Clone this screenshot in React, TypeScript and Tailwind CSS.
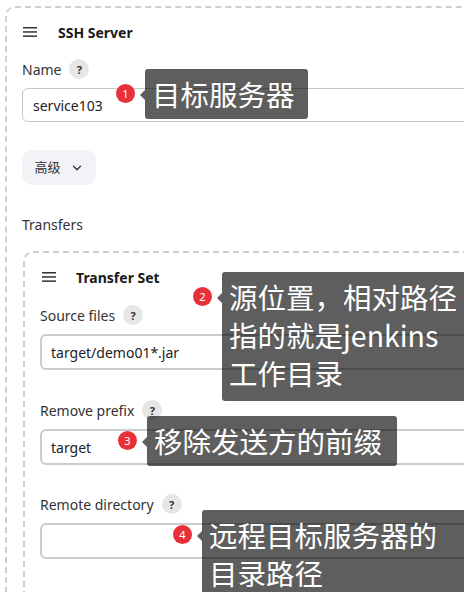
import { ChevronDown } from "lucide-react";

const uiFont = { fontFamily: '"Noto Sans", "Noto Sans CJK SC", sans-serif' };

function Burger() {
  return (
    <svg width="14" height="10" viewBox="0 0 14 10" className="shrink-0">
      <rect x="0" y="0" width="14" height="1.5" fill="#333" />
      <rect x="0" y="4.2" width="14" height="1.5" fill="#333" />
      <rect x="0" y="8.4" width="14" height="1.5" fill="#333" />
    </svg>
  );
}

function Help() {
  return (
    <span className="flex h-5 w-5 items-center justify-center rounded-full bg-[#e6e6e6] text-[11px] font-bold leading-none text-[#333]">
      ?
    </span>
  );
}

function Label({ text }: { text: string }) {
  return (
    <div className="flex h-5 items-center gap-2 text-[14px] text-[#333]">
      <span>{text}</span>
      <Help />
    </div>
  );
}

function TextBox({ value, thin }: { value?: string; thin?: boolean }) {
  return (
    <div
      className={
        thin
          ? "mt-[9px] flex h-[34px] w-[460px] items-center rounded-[6px] border border-[#c6c6c6] px-[10px] text-[14px] text-[#222]"
          : "mt-[9px] flex h-[36px] w-[460px] items-center rounded-[6px] border-2 border-[#c9cdcf] px-[9px] text-[14px] text-[#222]"
      }
    >
      {value}
    </div>
  );
}

// annotation: red numbered dot + dark callout box, laid over the form
function Callout({
  n,
  lines,
  x,
  y,
  w,
  h,
}: {
  n: number;
  lines: string[];
  x: number;
  y: number;
  w: number;
  h: number;
}) {
  return (
    <div className="absolute flex items-start" style={{ left: x - 29, top: y }}>
      <div className="mt-[15px] flex h-[19px] w-[19px] shrink-0 items-center justify-center rounded-full bg-[#e8303a] text-[11px] leading-none text-white">
        {n}
      </div>
      <div className="ml-[5px] mt-[21px] h-0 w-0 shrink-0 border-y-[5px] border-r-[5px] border-y-transparent border-r-black/[0.63]" />
      <div
        className="shrink-0 rounded-[3px] bg-black/[0.63] px-[7px] pt-[6px] text-[28.5px] leading-[38px] text-white"
        style={{ width: w, height: h, fontFamily: '"Noto Sans CJK SC", sans-serif' }}
      >
        {lines.map((l) => (
          <div key={l} className="whitespace-nowrap">
            {l}
          </div>
        ))}
      </div>
    </div>
  );
}

export default function App() {
  return (
    <div className="relative h-[592px] w-[464px] overflow-hidden bg-white" style={uiFont}>
      <div className="ml-[5px] mt-[6px] w-[500px] rounded-tl-[10px] border-2 border-dashed border-[#cfcfcf] pl-[15px] pt-[14px] pb-10">
        <div className="flex h-5 items-center gap-[21px] pl-[1px]">
          <Burger />
          <span className="text-[14px] font-bold text-[#1a1a1a]">SSH Server</span>
        </div>

        <div className="mt-[17px]">
          <Label text="Name" />
          <TextBox value="service103" thin />
        </div>

        <button className="mt-[28px] flex h-[35px] w-[74px] items-center justify-center gap-[9px] rounded-[10px] bg-[#f3f3f7] text-[13px] text-[#333]">
          <span>高级</span>
          <ChevronDown size={14} strokeWidth={2.4} />
        </button>

        <div className="mt-[29px] flex h-5 items-center text-[14px] text-[#333]">Transfers</div>

        <div className="ml-[1px] mt-[17px] rounded-tl-[10px] border-2 border-dashed border-[#cfcfcf] pl-[15px] pt-[14px] pb-10">
          <div className="flex h-5 items-center gap-[20px] pl-[2px]">
            <Burger />
            <span className="text-[14px] font-bold text-[#1a1a1a]">Transfer Set</span>
          </div>

          <div className="mt-[18px]">
            <Label text="Source files" />
            <TextBox value="target/demo01*.jar" />
          </div>
          <div className="mt-[30px]">
            <Label text="Remove prefix" />
            <TextBox value="target" />
          </div>
          <div className="mt-[29px]">
            <Label text="Remote directory" />
            <TextBox />
          </div>
          <div className="mt-[36px]">
            <Label text="Exec command" />
          </div>
        </div>
      </div>

      <Callout n={1} lines={["目标服务器"]} x={145} y={69} w={163} h={50} />
      <Callout
        n={2}
        lines={["源位置，相对路径", "指的就是jenkins", "工作目录"]}
        x={222}
        y={272}
        w={260}
        h={129}
      />
      <Callout n={3} lines={["移除发送方的前缀"]} x={147} y={416} w={250} h={50} />
      <Callout n={4} lines={["远程目标服务器的", "目录路径"]} x={202} y={510} w={270} h={100} />
    </div>
  );
}
